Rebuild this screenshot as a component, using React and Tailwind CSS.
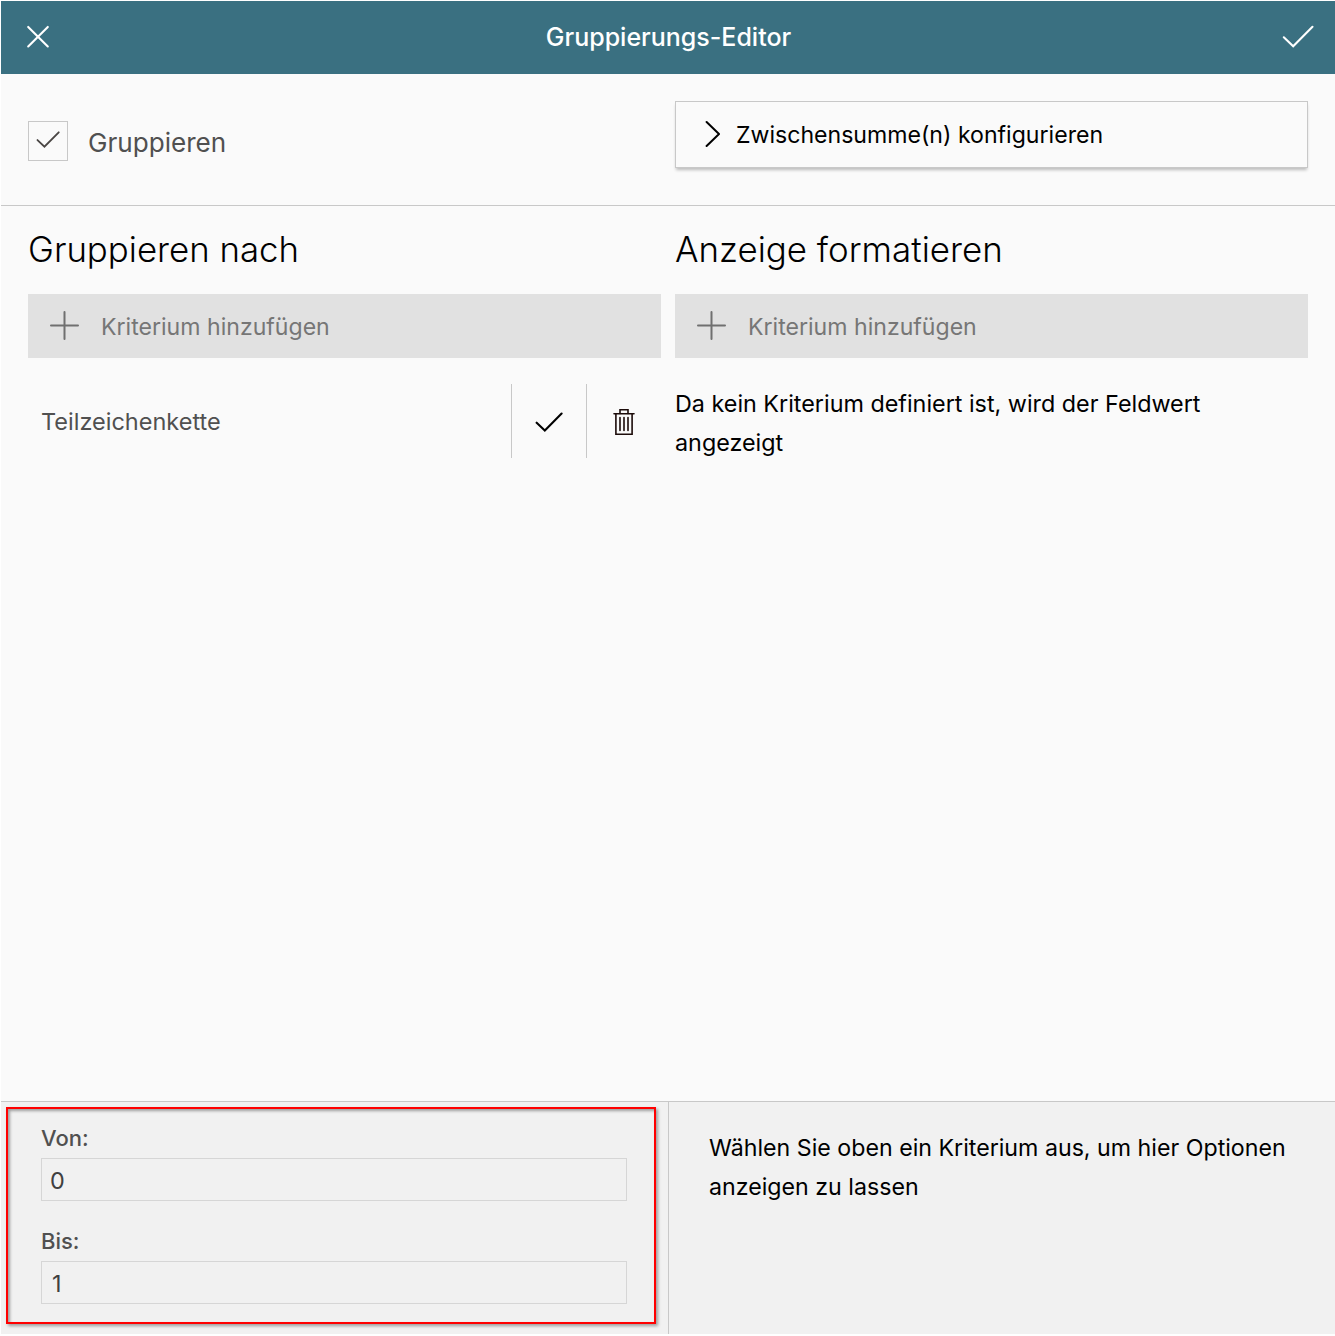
function CloseIcon() {
  return (
    <svg width="24" height="24" viewBox="0 0 24 24" fill="none" stroke="#fff" strokeWidth="2.1" strokeLinecap="round" strokeLinejoin="round">
      <path d="M2.2 1.9 21.8 21.5M21.8 1.9 2.2 21.5" />
    </svg>
  );
}

function CheckIcon({ className, strokeWidth }) {
  return (
    <svg viewBox="0 0 32 23" className={className} fill="none" stroke="currentColor" strokeWidth={strokeWidth} strokeLinecap="round" strokeLinejoin="miter">
      <path d="M1.8 12.3 11.2 21.2 30.5 1.8" />
    </svg>
  );
}

function ChevronIcon() {
  return (
    <svg width="16" height="28" viewBox="0 0 16 28" fill="none" stroke="#000" strokeWidth="2" strokeLinecap="round" strokeLinejoin="round">
      <path d="M2.6 2 15 14 2.6 26" />
    </svg>
  );
}

function PlusIcon() {
  return (
    <svg width="30" height="30" viewBox="0 0 30 30" fill="none" stroke="#707070" strokeWidth="2" strokeLinecap="round">
      <path d="M15.5 1V28M2 14.5H29" />
    </svg>
  );
}

function TrashIcon() {
  return (
    <svg width="22" height="28" viewBox="0 0 22 28" fill="none" stroke="#1c0c0a" strokeWidth="1.6" strokeLinecap="round">
      <path d="M1 5.8H21" />
      <path d="M7 5.5V1.8H15V5.5" />
      <path d="M2.9 6V26.3H19.1V6" />
      <path d="M7 9.5V22.5M11 9.5V22.5M15 9.5V22.5" />
    </svg>
  );
}

function AddButton() {
  return (
    <button className="flex h-16 w-full items-center bg-[#e1e1e1] pb-px pl-[21px] text-[#767676]">
      <PlusIcon />
      <span className="ml-[22px] pt-[3px] text-[23.1px]">Kriterium hinzufügen</span>
    </button>
  );
}

function Field({ label, children }) {
  return (
    <div className="flex flex-col">
      <label className="h-[34px] text-[22px] leading-7 font-medium text-[#505050]">{label}</label>
      <div className="flex h-[43px] items-center border border-[#d6d6d6] pt-0.5 pl-2 text-[23.4px] text-[#404040]">{children}</div>
    </div>
  );
}

export default function App() {
  return (
    <div className="h-[1334px] w-[1335px] bg-white pt-px pl-px font-['Inter',sans-serif] text-[23.2px] leading-[39px] text-black">
      <div className="flex h-full flex-col bg-[#fafafa]">
        <header className="flex h-[73px] shrink-0 items-center justify-between bg-[#3a7081] pr-[21px] pb-0.5 pl-[25px] text-white">
          <div className="w-[29px]">
            <CloseIcon />
          </div>
          <h1 className="pt-0.5 text-[25px] font-medium">Gruppierungs-Editor</h1>
          <CheckIcon className="h-[23px] w-8" strokeWidth="2.1" />
        </header>

        <section className="grid h-[132px] shrink-0 grid-cols-[633px_633px] gap-[14px] border-b border-[#c8c8c8] pt-[27px] pl-[27px]">
          <div className="mt-5 flex h-10 items-center">
            <div className="flex size-10 items-center justify-center border border-[#c8c8c8] pb-1 text-[#4a4644]">
              <CheckIcon className="h-[17px] w-6" strokeWidth="2.5" />
            </div>
            <span className="ml-5 pt-[3px] text-[26.1px] text-[#505050]">Gruppieren</span>
          </div>
          <button className="flex h-[67px] items-center border border-[#c8c8c8] pb-0.5 pl-7 shadow-[0_3px_3px_-1px_rgba(0,0,0,0.25)]">
            <ChevronIcon />
            <span className="ml-4 pt-[3px] text-[23.1px]">Zwischensumme(n) konfigurieren</span>
          </button>
        </section>

        <main className="grid grow grid-cols-[633px_633px] gap-[14px] pl-[27px]">
          <section className="flex flex-col">
            <h2 className="h-[88px] pt-6 text-[34.8px] font-light">Gruppieren nach</h2>
            <AddButton />
            <div className="mt-[26px] flex h-[74px] items-center">
              <span className="grow pl-[13px] text-[23.5px] text-[#505050]">Teilzeichenkette</span>
              <div className="flex h-full w-[75px] items-center justify-center border-l border-[#c8c8c8] pt-px">
                <CheckIcon className="h-5 w-7" strokeWidth="2.4" />
              </div>
              <div className="flex h-full w-[75px] items-center justify-center border-l border-[#c8c8c8] pt-px">
                <TrashIcon />
              </div>
            </div>
          </section>
          <section className="flex flex-col">
            <h2 className="h-[88px] pt-6 text-[34.9px] font-light">Anzeige formatieren</h2>
            <AddButton />
            <p className="mt-[26px] w-[560px] text-[23.33px]">Da kein Kriterium definiert ist, wird der Feldwert angezeigt</p>
          </section>
        </main>

        <footer className="flex h-[233px] shrink-0 border-t border-[#c8c8c8] bg-[#f1f1f1]">
          <div className="w-[668px] border-r border-[#c8c8c8] pt-[5px] pl-[5px]">
            <div className="flex h-[217px] w-[650px] flex-col gap-[26px] border-2 border-[#ff0000] pt-[15px] pr-[27px] pl-[33px] shadow-[2px_2px_3px_rgba(0,0,0,0.35),inset_2px_2px_3px_rgba(0,0,0,0.35)]">
              <Field label="Von:">0</Field>
              <Field label="Bis:"><span className="pl-0.5">1</span></Field>
            </div>
          </div>
          <p className="w-[640px] pt-[27px] pl-10">Wählen Sie oben ein Kriterium aus, um hier Optionen anzeigen zu lassen</p>
        </footer>
      </div>
    </div>
  );
}
